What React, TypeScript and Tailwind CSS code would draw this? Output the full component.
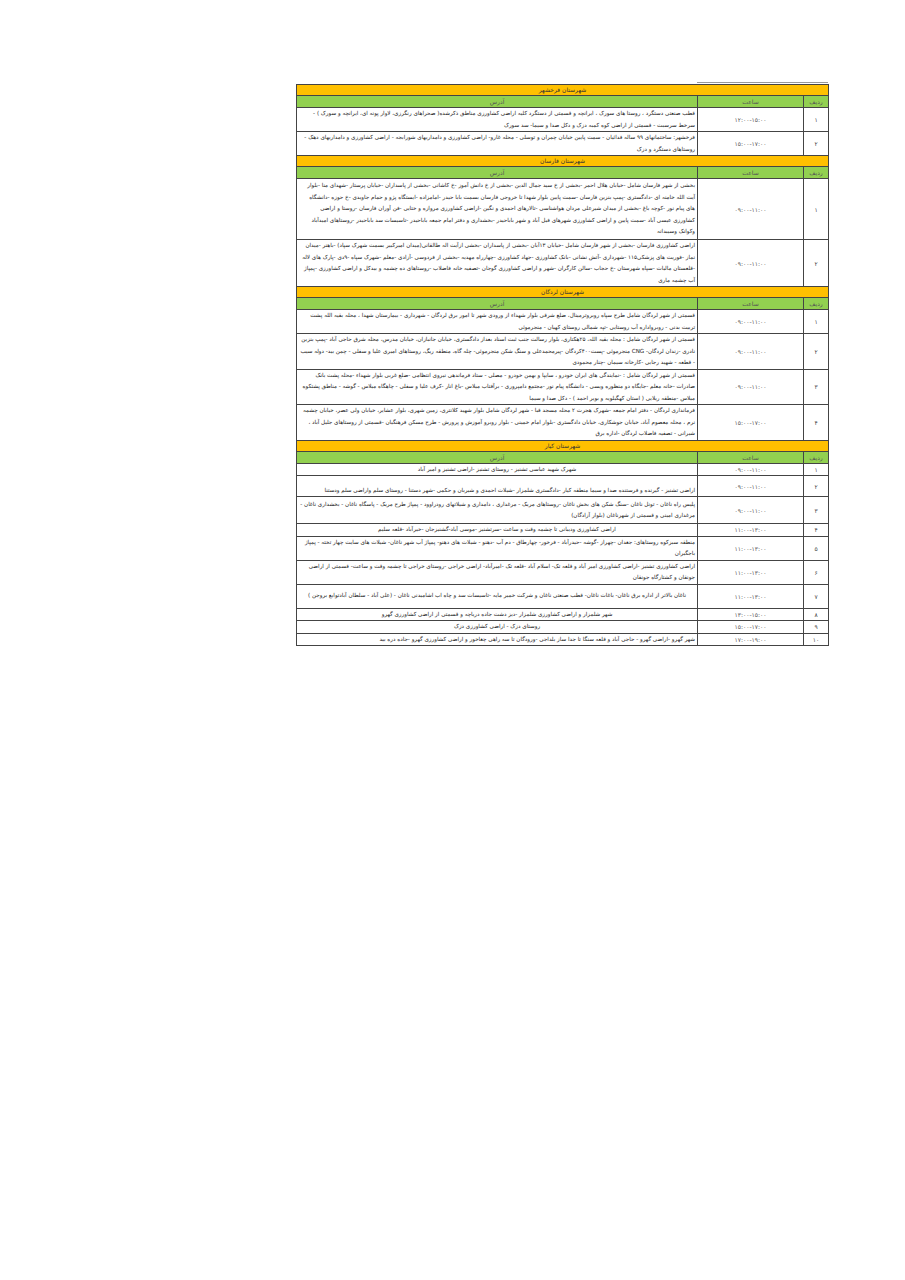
import React from 'react'

type Row = {
  n: string
  time: string
  text: string
  h: number
  align?: 'right' | 'center'
  bottom?: boolean
}

type Section = { title: string; rows: Row[] }

const sections: Section[] = [
  {
    title: 'شهرستان فرخشهر',
    rows: [
      {
        n: '۱',
        time: '۱۲:۰۰-۱۵:۰۰',
        h: 23,
        text: 'قطب صنعتی دستگرد ، روستا های سورک ، ایرانچه و قسمتی از دستگرد کلیه اراضی کشاورزی مناطق ذکرشده( صحراهای رنگرزی، لاوار پونه ای، ایرانچه و سورک ) - سرخط سرسبت - قسمتی از اراضی کوه کمبه دزک و دکل صدا و سیما- سد سورک',
      },
      {
        n: '۲',
        time: '۱۵:۰۰-۱۷:۰۰',
        h: 23,
        text: 'فرخشهر: ساختمانهای ۹۹ ساله فدائیان - سمت پایین خیابان چمران و توسلی - محله غارو- اراضی کشاورزی و دامداریهای شورابجه - اراضی کشاورزی و دامداریهای دهک - روستاهای دستگرد و دزک',
      },
    ],
  },
  {
    title: 'شهرستان فارسان',
    rows: [
      {
        n: '۱',
        time: '۰۹:۰۰-۱۱:۰۰',
        h: 61,
        text: 'بخشی از شهر فارسان شامل -خیابان هلال احمر -بخشی از خ سید جمال الدین -بخشی از خ دانش آموز -خ کاشانی -بخشی از پاسداران -خیابان پرستار -شهدای منا -بلوار آیت الله خامنه ای -دادگستری -پمپ بنزین فارسان -سمت پایین بلوار شهدا تا خروجی فارسان بسمت بابا حیدر -امامزاده -ایستگاه پژو و حمام جاویدی -خ حوزه -دانشگاه های پیام نور -کوچه باغ -بخشی از میدان شیرعلی مردان هواشناسی -تالارهای احمدی و نگین -اراضی کشاورزی مروازه و ختایی -فن آوران فارسان -روستا و اراضی کشاورزی عیسی آباد -سمت پایین و اراضی کشاورزی شهرهای فیل آباد و شهر باباحیدر -بخشداری و دفتر امام جمعه باباحیدر -تاسیسات سد باباحیدر -روستاهای امیدآباد وکوانک وسیبدانه',
      },
      {
        n: '۲',
        time: '۰۹:۰۰-۱۱:۰۰',
        h: 46,
        text: 'اراضی کشاورزی فارسان -بخشی از شهر فارسان شامل -خیابان ۱۳آبان -بخشی از پاسداران -بخشی ازآیت اله طالقانی(میدان امیرکبیر بسمت شهرک سپاد) -باهنر -میدان نماز -فوریت های پزشکی۱۱۵ -شهرداری -آتش نشانی -بانک کشاورزی -جهاد کشاورزی -چهارراه مهدیه -بخشی از فردوسی -آزادی -معلم -شهرک سپاه -۹دی -پارک های لاله -قلعستان مالیات -سپاه شهرستان -خ حجاب -سالن کارگران -شهر و اراضی کشاورزی گوجان -تصفیه خانه فاضلاب -روستاهای ده چشمه و بیدکل و اراضی کشاورزی -پمپاژ آب چشمه ماری',
      },
    ],
  },
  {
    title: 'شهرستان لردگان',
    rows: [
      {
        n: '۱',
        time: '۰۹:۰۰-۱۱:۰۰',
        h: 24,
        text: 'قسمتی از شهر لردگان شامل طرح سپاه روبروترمینال، ضلع شرقی بلوار شهداء از ورودی شهر تا امور برق لردگان - شهرداری - بیمارستان شهدا ، محله بقیه الله پشت تربیت بدنی - روبرواداره آب روستایی -تپه شمالی روستای کهیان - منجرموئی',
      },
      {
        n: '۲',
        time: '۰۹:۰۰-۱۱:۰۰',
        h: 34,
        text: 'قسمتی از شهر لردگان شامل : محله بقیه الله، ۲۵هکتاری، بلوار رسالت جنب ثبت اسناد بعداز دادگستری، خیابان جانبازان، خیابان مدرس، محله شرق حاجی آباد -پمپ بنزین نادری -زندان لردگان- CNG منجرموئی -پست۴۰۰کردگان -پیرمحمدعلی و سنگ شکن منجرموئی- چله گاه، منطقه ریگ، روستاهای امیری علیا و سفلی - چمن بید- دوله سیب - قطعه - شهید رجایی -کارخانه سیمان -چنار محمودی',
      },
      {
        n: '۳',
        time: '۰۹:۰۰-۱۱:۰۰',
        h: 34,
        text: 'قسمتی از شهر لردگان شامل : -نمایندگی های ایران خودرو ، سایپا و بهمن خودرو - مصلی - ستاد فرماندهی نیروی انتظامی -ضلع غربی بلوار شهداء -محله پشت بانک صادرات -خانه معلم -جایگاه دو منظوره ویسی - دانشگاه پیام نور -مجتمع دامپروری - برآفتاب میلاس -باغ انار -کرف علیا و سفلی - چاهگاه میلاس - گوشه - مناطق پشتکوه میلاس -منطقه ریلایی ( استان کهگیلویه و بویر احمد ) - دکل صدا و سیما',
      },
      {
        n: '۴',
        time: '۱۵:۰۰-۱۷:۰۰',
        h: 34,
        text: 'فرمانداری لردگان - دفتر امام جمعه -شهرک هجرت ۲ محله مسجد قبا - شهر لردگان شامل بلوار شهید کلانتری، زمین شهری، بلوار عشایر، خیابان ولی عصر، خیابان چشمه نرم ، محله معصوم آباد، خیابان جوشکاری، خیابان دادگستری -بلوار امام خمینی - بلوار روبرو آموزش و پرورش - طرح مسکن فرهنگیان -قسمتی از روستاهای جلیل آباد ، شیرانی - تصفیه فاضلاب لردگان -اداره برق',
      },
    ],
  },
  {
    title: 'شهرستان کیار',
    rows: [
      {
        n: '۱',
        time: '۰۹:۰۰-۱۱:۰۰',
        h: 12,
        align: 'center',
        text: 'شهرک شهید عباسی تشنیز - روستای تشنیز -اراضی تشنیز و امیر آباد',
      },
      {
        n: '۲',
        time: '۰۹:۰۰-۱۱:۰۰',
        h: 21,
        bottom: true,
        text: 'اراضی تشنیز - گیرنده و فرستنده صدا و سیما منطقه کیار -دادگستری شلمزار -شیلات احمدی و شیربان و حکمی -شهر دستنا - روستای سلم واراضی سلم ودستنا',
      },
      {
        n: '۳',
        time: '۰۹:۰۰-۱۱:۰۰',
        h: 27,
        text: 'پلیس راه ناغان - تونل ناغان -سنگ شکن های بخش ناغان -روستاهای مریک - مرغداری ، دامداری و شیلاتهای رودراوود - پمپاژ طرح مریک - پاسگاه ناغان - بخشداری ناغان - مرغداری امینی و قسمتی از شهرناغان (بلوار آزادگان)',
      },
      {
        n: '۴',
        time: '۱۱:۰۰-۱۳:۰۰',
        h: 12,
        align: 'center',
        text: 'اراضی کشاورزی ودیبانی تا چشمه وقت و ساعت -سرتشنیز -موسی آباد-گشنیزجان -خیرآباد -قلعه سلیم',
      },
      {
        n: '۵',
        time: '۱۱:۰۰-۱۳:۰۰',
        h: 23,
        text: 'منطقه سبزکوه روستاهای: جغدان -چهراز -گوشه -حیدرآباد - فرخور- چهارطاق - دم آب -دهنو - شیلات های دهنو- پمپاژ آب شهر ناغان- شیلات های سایت چهار تخته - پمپاژ باجگیران',
      },
      {
        n: '۶',
        time: '۱۱:۰۰-۱۳:۰۰',
        h: 23,
        text: 'اراضی کشاورزی تشنیز -اراضی کشاورزی امیر آباد و قلعه تک- اسلام آباد -قلعه تک -امیرآباد- اراضی خراجی -روستای خراجی تا چشمه وقت و ساعت- قسمتی از اراضی جونقان و کشتارگاه جونقان',
      },
      {
        n: '۷',
        time: '۱۱:۰۰-۱۳:۰۰',
        h: 24,
        align: 'center',
        text: 'ناغان بالاتر از اداره برق ناغان- باغات ناغان- قطب صنعتی ناغان و شرکت خمیر مایه -تاسیسات سد و چاه اب اشامیدنی ناغان - (علی آباد - سلطان آبادتوابع بروجن )',
      },
      {
        n: '۸',
        time: '۱۳:۰۰-۱۵:۰۰',
        h: 12,
        align: 'center',
        text: 'شهر شلمزار و اراضی کشاورزی شلمزار -دیز دشت جاده دریاچه و قسمتی از اراضی کشاورزی گهرو',
      },
      {
        n: '۹',
        time: '۱۵:۰۰-۱۷:۰۰',
        h: 12,
        align: 'center',
        text: 'روستای دزک - اراضی کشاورزی دزک',
      },
      {
        n: '۱۰',
        time: '۱۷:۰۰-۱۹:۰۰',
        h: 12,
        text: 'شهر گهرو -اراضی گهرو - حاجی آباد و قلعه سنگا تا جدا ساز بلداجی -ورودگان تا سه راهی چغاخور و اراضی کشاورزی گهرو -جاده دره بید',
      },
    ],
  },
]

const font = { fontFamily: '"DejaVu Sans", sans-serif' }

function SectionBlock({ s }: { s: Section }) {
  return (
    <>
      <tr className="h-[11px]">
        <td colSpan={3} className="border border-[#444] bg-[#ffc000] text-center text-[6px] leading-[10px] text-[#333]">
          {s.title}
        </td>
      </tr>
      <tr className="h-[12px]">
        <td className="border border-[#444] bg-[#92d050] text-center text-[6px] leading-[11px] text-[#555]">ردیف</td>
        <td className="border border-[#444] bg-[#92d050] text-center text-[6px] leading-[11px] text-[#555]">ساعت</td>
        <td className="border border-[#444] bg-[#92d050] text-center text-[6px] leading-[11px] text-[#555]">آدرس</td>
      </tr>
      {s.rows.map((r) => (
        <tr key={s.title + r.n} style={{ height: r.h }}>
          <td className="border border-[#444] text-center align-middle text-[6px] text-[#444]">{r.n}</td>
          <td className="border border-[#444] text-center align-middle text-[6px] text-[#555]">{r.time}</td>
          <td
            className={
              'border border-[#444] px-[2px] text-[5.6px] leading-[11.5px] text-[#222] ' +
              (r.align === 'center' ? 'text-center ' : 'text-right ') +
              (r.bottom ? 'align-bottom' : 'align-middle')
            }
          >
            {r.text}
          </td>
        </tr>
      ))}
    </>
  )
}

export default function App() {
  return (
    <div className="w-[905px] h-[1280px] bg-white" style={font}>
      <div className="pl-[296px] pt-[82px]">
        <div className="flex justify-start w-[532px]">
          <div className="w-[401px]" />
          <div className="w-[131px] border-t border-[#999]" />
        </div>
        <table dir="rtl" className="w-[532px] table-fixed border-collapse mt-[1px]">
          <colgroup>
            <col className="w-[25px]" />
            <col className="w-[106px]" />
            <col className="w-[401px]" />
          </colgroup>
          <tbody>
            {sections.map((s) => (
              <SectionBlock key={s.title} s={s} />
            ))}
          </tbody>
        </table>
      </div>
    </div>
  )
}
